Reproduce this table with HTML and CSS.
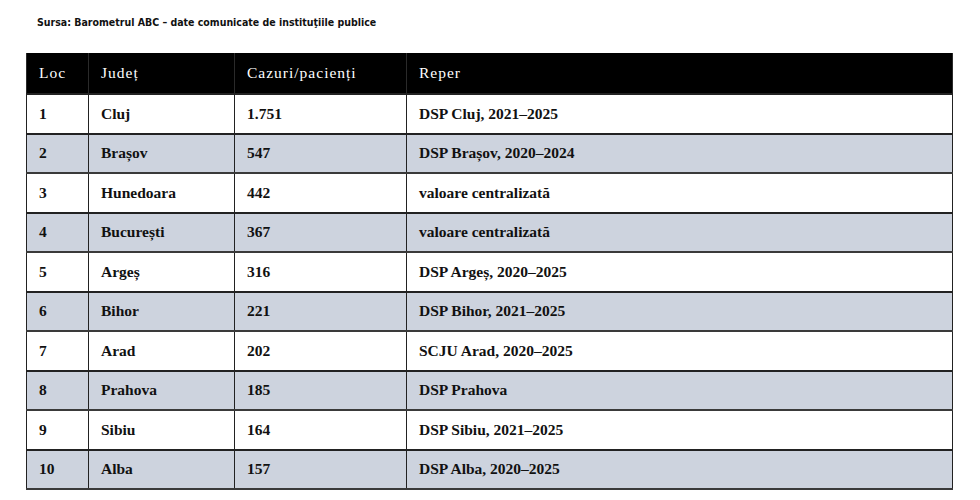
FILE: index.html
```html
<!DOCTYPE html>
<html lang="ro">
<head>
<meta charset="utf-8">
<link rel="stylesheet" href="styles.css">
</head>
<body>
<p class="source">Sursa: Barometrul ABC – date comunicate de instituţiile publice</p>
<table class="rank">
  <colgroup>
    <col class="c1"><col class="c2"><col class="c3"><col class="c4">
  </colgroup>
  <thead>
    <tr><th>Loc</th><th>Județ</th><th>Cazuri/pacienți</th><th>Reper</th></tr>
  </thead>
  <tbody>
    <tr><td>1</td><td>Cluj</td><td>1.751</td><td>DSP Cluj, 2021–2025</td></tr>
    <tr class="alt"><td>2</td><td>Brașov</td><td>547</td><td>DSP Brașov, 2020–2024</td></tr>
    <tr><td>3</td><td>Hunedoara</td><td>442</td><td>valoare centralizată</td></tr>
    <tr class="alt"><td>4</td><td>București</td><td>367</td><td>valoare centralizată</td></tr>
    <tr><td>5</td><td>Argeș</td><td>316</td><td>DSP Argeș, 2020–2025</td></tr>
    <tr class="alt"><td>6</td><td>Bihor</td><td>221</td><td>DSP Bihor, 2021–2025</td></tr>
    <tr><td>7</td><td>Arad</td><td>202</td><td>SCJU Arad, 2020–2025</td></tr>
    <tr class="alt"><td>8</td><td>Prahova</td><td>185</td><td>DSP Prahova</td></tr>
    <tr><td>9</td><td>Sibiu</td><td>164</td><td>DSP Sibiu, 2021–2025</td></tr>
    <tr class="alt"><td>10</td><td>Alba</td><td>157</td><td>DSP Alba, 2020–2025</td></tr>
  </tbody>
</table>
</body>
</html>
```
FILE: styles.css
```css
html, body {
  margin: 0;
  background: #ffffff;
}
body {
  padding: 0 28px 0 26px;
}
.source {
  margin: 0;
  padding: 15px 0 0 11px;
  height: 38px;
  box-sizing: border-box;
  font-family: "DejaVu Sans Condensed", "DejaVu Sans", Tahoma, sans-serif;
  font-stretch: condensed;
  font-size: 10.5px;
  font-weight: bold;
  color: #111;
  line-height: 14px;
}
.rank {
  width: 926px;
  border-collapse: collapse;
  table-layout: fixed;
  font-family: "Liberation Serif", "Times New Roman", serif;
  font-size: 15.5px;
  margin-top: 15px;
}
.c1 { width: 62px; }
.c2 { width: 146px; }
.c3 { width: 172px; }
.c4 { width: 546px; }
.rank th {
  background: #000;
  color: #fff;
  font-weight: normal;
  letter-spacing: 1px;
  text-align: left;
  height: 40px;
  padding: 0 12px;
  border-left: 1px solid #2a2a2a;
  border-right: 1px solid #2a2a2a;
}
.rank td {
  height: 37.5px;
  padding: 0 12px;
  font-weight: bold;
  color: #111;
  border: 1px solid #222;
  border-top: 2px solid #222;
}
.rank tr.alt td {
  background: #cdd3de;
  border-bottom: 2px solid #3a3a3a;
}
```
